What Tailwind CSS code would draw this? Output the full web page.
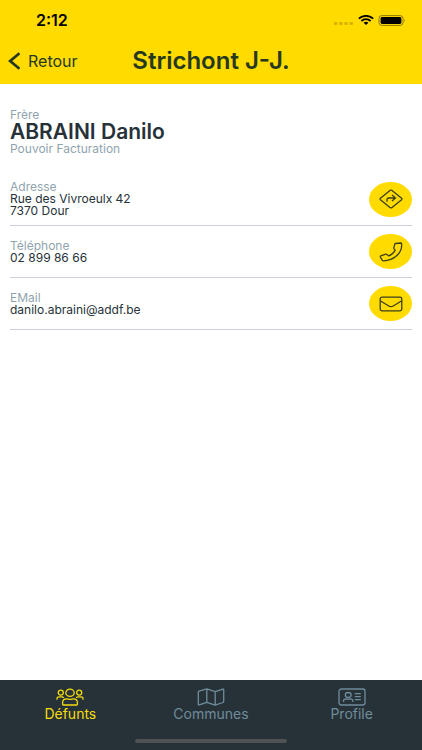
<!DOCTYPE html>
<html lang="fr">
<head>
<meta charset="utf-8">
<meta name="viewport" content="width=device-width, initial-scale=1">
<title>Strichont J-J.</title>
<script src="https://cdn.jsdelivr.net/npm/@tailwindcss/browser@4"></script>
</head>
<body class="flex min-h-screen flex-col bg-white font-['Inter','Liberation_Sans',sans-serif] text-[#263238]">
  <header class="bg-[#ffdb00] pb-[7px]">
    <div class="flex h-10 items-center justify-between pr-4 pl-9 text-black">
      <span class="text-base leading-5 font-semibold">2:12</span>
      <div class="flex items-center gap-1">
        <svg class="mt-2 h-1 w-5" viewBox="0 0 20 4" fill="#d6b200" aria-hidden="true"><rect x="0" y="0" width="3.4" height="3" rx="1"/><rect x="5.2" y="0" width="3.4" height="3" rx="1"/><rect x="10.4" y="0" width="3.4" height="3" rx="1"/><rect x="15.6" y="0" width="3.4" height="3" rx="1"/></svg>
        <svg class="h-[10px] w-4" viewBox="0 0 16 10" fill="none" stroke="#000" stroke-width="1.8" aria-hidden="true"><path d="M.8 3.6C4.800-.1 11.200-.1 15.200 3.600M3.400 6C6 3.600 10 3.600 12.600 6"/><path d="M5.600 7.700Q8 6 10.400 7.700L8 10z" fill="#000" stroke="none"/></svg>
        <svg class="h-[11px] w-7" viewBox="0 0 28 11" aria-hidden="true"><rect x="1" y=".6" width="24" height="9.800" rx="2.800" fill="none" stroke="#8f7b00" stroke-width="1"/><rect x="2.600" y="2" width="20.800" height="7" rx="1.400"/><path d="M26.300 3.800q1.500 1.700 0 3.400z" fill="#8f7b00"/></svg>
      </div>
    </div>
    <div class="grid h-[37px] grid-cols-[1fr_auto_1fr] items-center px-2 pt-[5px]">
      <button type="button" class="flex items-center gap-2 text-base leading-5 text-[#263820]">
        <svg class="h-[18px] w-3" viewBox="0 0 12 18" fill="none" stroke="#263820" stroke-width="2.800" aria-hidden="true"><path d="M11.500 1.200 2.200 9l9.300 7.800"/></svg>
        Retour
      </button>
      <h1 class="text-2xl leading-7 font-semibold text-[#263820]">Strichont J-J.</h1>
    </div>
  </header>

  <main class="flex-1 px-[10px] pt-[25px]">
    <section class="mb-[18px] text-xs leading-3 text-[#90a4ae]">
      <p>Frère</p>
      <h2 class="text-[21px] leading-[22px] font-semibold text-[#263238]">ABRAINI Danilo</h2>
      <p>Pouvoir Facturation</p>
    </section>

    <section class="text-xs leading-3">
      <div class="flex items-center justify-between border-b border-[#cdd0dc] py-2">
        <div>
          <p class="text-[#90a4ae]">Adresse</p>
          <p>Rue des Vivroeulx 42</p>
          <p>7370 Dour</p>
        </div>
        <button type="button" aria-label="Itinéraire" class="flex h-[35px] w-[43px] items-center justify-center rounded-[50%] bg-[#ffdb00]">
          <svg class="h-5 w-6" viewBox="0 0 24 20" fill="none" stroke="#3b401c" stroke-width="1.300" stroke-linejoin="round" stroke-linecap="round" aria-hidden="true"><path d="M11.300 1.300 1.400 9.300q-.7.700 0 1.400l9.900 8q.7.500 1.400 0l9.900-8q.7-.7 0-1.400l-9.900-8q-.7-.5-1.400 0z"/><path d="M8 12.300v-1.800q0-1.500 1.600-1.500h6.600M13.300 6.300 16.500 9l-3.200 2.700"/></svg>
        </button>
      </div>
      <div class="flex items-center justify-between border-b border-[#cdd0dc] py-2">
        <div>
          <p class="text-[#90a4ae]">Téléphone</p>
          <p>02 899 86 66</p>
        </div>
        <button type="button" aria-label="Appeler" class="flex h-[35px] w-[43px] items-center justify-center rounded-[50%] bg-[#ffdb00]">
          <svg class="h-5 w-6" viewBox="0 0 24 20" fill="none" stroke="#3b401c" stroke-width="1.300" stroke-linejoin="round" aria-hidden="true"><path d="M16.600 1.500 21.700 1q.8 0 .9.800C23.500 11 14.500 19 4.200 18.800q-.8 0-1.100-.7L1.300 14.800q-.3-.7.500-1l4.900-1.700q.7-.2 1.200.3l1.900 1.500q4.300-1.800 6.400-5.500L15.100 6.800q-.5-.4-.3-1l1-3.700q.2-.5.800-.6z"/></svg>
        </button>
      </div>
      <div class="flex items-center justify-between border-b border-[#cdd0dc] py-2">
        <div>
          <p class="text-[#90a4ae]">EMail</p>
          <p>danilo.abraini@addf.be</p>
        </div>
        <button type="button" aria-label="Envoyer un e-mail" class="flex h-[35px] w-[43px] items-center justify-center rounded-[50%] bg-[#ffdb00]">
          <svg class="h-4 w-6" viewBox="0 0 24 16" fill="none" stroke="#3b401c" stroke-width="1.300" stroke-linejoin="round" aria-hidden="true"><rect x="1.200" y="1.200" width="21.600" height="13.600" rx="1.800"/><path d="M1.200 4.800 9.800 10q2.200 1.300 4.400 0l8.600-5.200"/></svg>
        </button>
      </div>
    </section>
  </main>

  <footer class="bg-[#263238] pt-2">
    <nav class="grid grid-cols-3 text-sm leading-[15px] text-[#708c9b]">
      <a href="#" aria-current="page" class="flex flex-col items-center text-[#f5dc0c]">
        <svg class="h-[18px] w-7" viewBox="0 0 28 18" fill="none" stroke="currentColor" stroke-width="1.300" stroke-linecap="round" aria-hidden="true"><ellipse cx="14" cy="4.800" rx="4.200" ry="3.600"/><circle cx="4.800" cy="4.600" r="2.500"/><circle cx="23.200" cy="4.600" r="2.500"/><path d="M6.600 16.300v-1.600c0-2.200 1.700-3.800 4.200-3.800 1.300 0 1.700.4 3.200.4s1.900-.4 3.200-.4c2.500 0 4.200 1.600 4.200 3.800v1.600q0 .7-.9.700h-13q-.9 0-.9-.7zM1 11.200v-.6q0-1.800 2.200-1.800h2.600q1 0 1.700.6M27 11.200v-.6q0-1.800-2.200-1.800h-2.600q-1 0-1.700.6"/></svg>
        Défunts
      </a>
      <a href="#" class="flex flex-col items-center">
        <svg class="h-[18px] w-7" viewBox="0 0 28 18" fill="none" stroke="currentColor" stroke-width="1.300" stroke-linejoin="round" aria-hidden="true"><path d="M1.300 4v12.300q0 .8.900.5L9.800 14.300l8.400 2.900 7.700-2.700q.8-.3.800-1V1.700q0-.8-.9-.5L18.200 3.700 9.800.9 2.100 3.200q-.8.200-.8.800zM9.800.9v13.400M18.200 3.700v13.500"/></svg>
        Communes
      </a>
      <a href="#" class="flex flex-col items-center">
        <svg class="h-[18px] w-7" viewBox="0 0 28 18" fill="none" stroke="currentColor" stroke-width="1.300" stroke-linecap="round" aria-hidden="true"><rect x="1" y="1" width="26" height="16" rx="2.200"/><ellipse cx="10.200" cy="7" rx="2.900" ry="2.500"/><path d="M5.600 13.400v-.7q0-1.900 2.300-1.900 2.300.7 4.600 0 2.300 0 2.300 1.900v.7M17.300 5.700h5M17.300 8.700h5M17.300 11.700h5"/></svg>
        Profile
      </a>
    </nav>
    <div class="flex justify-center pt-[18px] pb-[7px]"><div class="h-1 w-9/25 rounded-full bg-[#505254]"></div></div>
  </footer>
</body>
</html>
